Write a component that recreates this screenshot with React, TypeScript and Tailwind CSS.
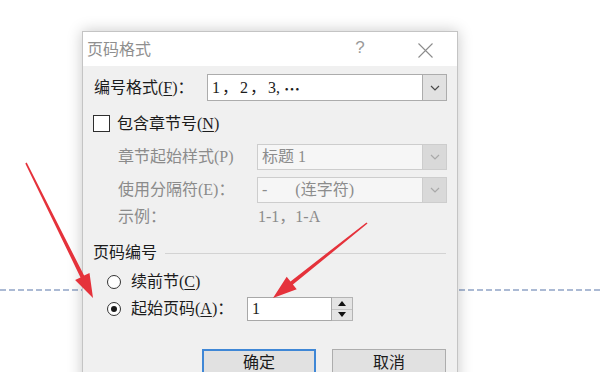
import type { ReactNode } from "react";

const font = "font-['Liberation_Serif','Noto_Sans_CJK_SC',sans-serif]";

function Key({ children }: { children: ReactNode }) {
  return <span className="underline underline-offset-2 decoration-1">{children}</span>;
}

function Chevron({ muted }: { muted?: boolean }) {
  return (
    <svg width="10" height="6" viewBox="0 0 10 6" fill="none">
      <path d="M1 1l4 4 4-4" stroke={muted ? "#a9a9a9" : "#4a4a4a"} strokeWidth="1.2" />
    </svg>
  );
}

function Combo({ value, disabled, width }: { value: ReactNode; disabled?: boolean; width: string }) {
  return (
    <div
      className={`flex h-full items-stretch border ${width} ${
        disabled ? "border-[#cdcdcd] bg-[#f6f6f6] text-[#8c8c8c]" : "border-[#acacac] bg-white text-[#1c1c1c]"
      }`}
    >
      <div className="flex flex-1 items-center whitespace-pre pl-[4px]">{value}</div>
      <div
        className={`flex w-[24px] items-center justify-center border-l ${
          disabled ? "border-[#cdcdcd] bg-[#d9d9d9]" : "border-[#acacac] bg-[#e1e1e1]"
        }`}
      >
        <Chevron muted={disabled} />
      </div>
    </div>
  );
}

function Radio({ checked }: { checked?: boolean }) {
  return (
    <span className="ml-[13px] flex h-[14px] w-[14px] items-center justify-center rounded-full border border-[#333] bg-white">
      {checked && <span className="h-[6px] w-[6px] rounded-full bg-[#1a1a1a]" />}
    </span>
  );
}

function Spin() {
  return (
    <div className="flex h-full">
      <div className="flex w-[85px] items-center border border-[#a8a8a8] bg-white pl-[4px] text-[#1c1c1c]">1</div>
      <div className="flex w-[21px] flex-col border border-l-0 border-[#b4b4b4] bg-[#e4e4e4]">
        <div className="flex flex-1 items-center justify-center border-b border-[#c4c4c4]">
          <svg width="8" height="5" viewBox="0 0 8 5"><path d="M0 5L4 0L8 5Z" fill="#111" /></svg>
        </div>
        <div className="flex flex-1 items-center justify-center">
          <svg width="8" height="5" viewBox="0 0 8 5"><path d="M0 0L4 5L8 0Z" fill="#111" /></svg>
        </div>
      </div>
    </div>
  );
}

function Arrows() {
  return (
    <svg className="pointer-events-none absolute inset-0" width="600" height="372" viewBox="0 0 600 372">
      <polygon
        points="25.3,163.4 80.5,277.4 75.1,280.1 93,298 89.5,272.9 84.1,275.6 26.7,162.6"
        fill="#e5323b"
      />
      <polygon
        points="367.5,223.6 292.9,284.6 296.7,289.2 273,298 286.7,276.8 290.5,281.4 366.5,222.4"
        fill="#e5323b"
      />
    </svg>
  );
}

export default function App() {
  return (
    <div className={`relative h-[372px] w-[600px] overflow-hidden bg-white text-[16px] ${font}`}>
      {/* document page behind the dialog */}
      <div className="pt-[289px]">
        <div className="h-[2px] w-full bg-[repeating-linear-gradient(90deg,#abbad4_0_6px,transparent_6px_9px)]" />
      </div>

      <div className="absolute left-[82px] top-[31px] h-[360px] w-[376px] border border-[#c4c4c4] bg-[#f0f0f0] shadow-[0_0_14px_rgba(0,0,0,0.22)]">
        <div className="flex h-[34px] items-center bg-white pl-[4px] pr-[24px] pt-[2px]">
          <span className="flex-1 text-[#8f8f8f]">页码格式</span>
          <span className="-mt-[4px] w-[16px] text-center text-[17px] text-[#9a9a9a] font-['Liberation_Sans',sans-serif]">?</span>
          <span className="ml-[50px] flex w-[15px]">
            <svg width="15" height="15" viewBox="0 0 15 15">
              <path d="M0.5 0.5L14.5 14.5M14.5 0.5L0.5 14.5" stroke="#8c8c8c" strokeWidth="1.1" />
            </svg>
          </span>
        </div>

        <div className="pl-[11px] pr-[10px] pt-[8px] text-[#1c1c1c]">
          <div className="flex h-[27px] items-center">
            <span className="w-[113px] whitespace-nowrap">编号格式(<Key>F</Key>)：</span>
            <Combo
              value={
                <>
                  <span className="tracking-[2px]">1，2，</span>
                  <span>3, </span>
                  <span className="font-['Noto_Sans_CJK_SC',sans-serif] font-bold">⋯</span>
                </>
              }
              width="w-[240px]"
            />
          </div>

          <div className="mt-[14px] flex h-[17px] items-center">
            <span className="-ml-[1px] h-[17px] w-[17px] border border-[#2e2e2e] bg-white" />
            <span className="ml-[7px] whitespace-nowrap">包含章节号(<Key>N</Key>)</span>
          </div>

          <div className="mt-[12px] flex h-[26px] items-center text-[#8b8b8b]">
            <span className="ml-[24px] w-[139px] whitespace-nowrap">章节起始样式(P)</span>
            <Combo value="标题 1" width="w-[190px]" disabled />
          </div>

          <div className="mt-[7px] flex h-[26px] items-center text-[#8b8b8b]">
            <span className="ml-[24px] w-[139px] whitespace-nowrap">使用分隔符(E)：</span>
            <Combo value={"-       (连字符)"} width="w-[190px]" disabled />
          </div>

          <div className="mt-[4px] flex h-[20px] items-center text-[#8b8b8b]">
            <span className="ml-[24px] w-[140px]">示例：</span>
            <span>1-1，1-A</span>
          </div>

          <div className="mt-[16px] flex h-[20px] items-center">
            <span className="-ml-[1px] whitespace-nowrap">页码编号</span>
            <span className="ml-[8px] mr-[1px] h-0 flex-1 border-t border-[#d3d3d3]" />
          </div>

          <div className="mt-[9px] flex h-[20px] items-center">
            <Radio />
            <span className="ml-[10px] whitespace-nowrap">续前节(<Key>C</Key>)</span>
          </div>

          <div className="mt-[5px] flex h-[24px] items-center">
            <Radio checked />
            <span className="ml-[10px] w-[116px] whitespace-nowrap">起始页码(<Key>A</Key>)：</span>
            <Spin />
          </div>

          <div className="mr-[1px] mt-[28px] flex justify-end gap-[16px]">
            <button type="button" className="flex h-[28px] w-[114px] items-center justify-center border-2 border-[#3f87d6] bg-[#e1e1e1]">
              确定
            </button>
            <button type="button" className="flex h-[28px] w-[114px] items-center justify-center border border-[#adadad] bg-[#e1e1e1]">
              取消
            </button>
          </div>
        </div>
      </div>

      <Arrows />
    </div>
  );
}
